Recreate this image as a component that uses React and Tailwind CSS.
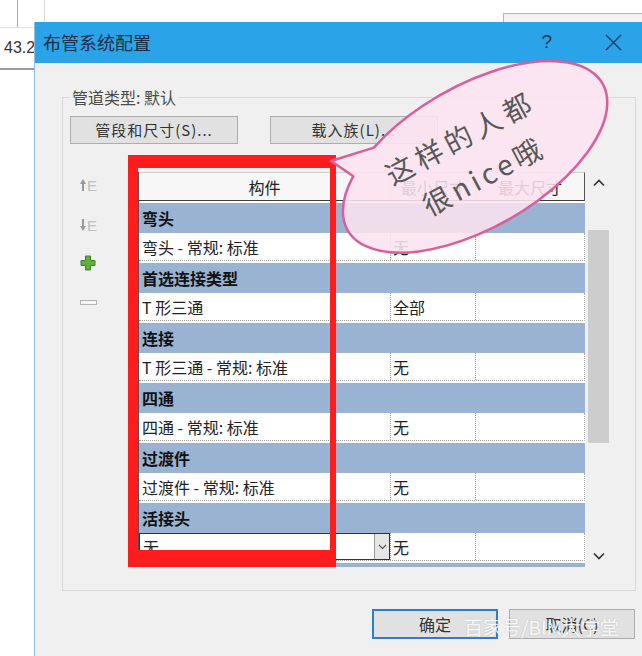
import React from 'react';

const rows = [
  { group: '弯头', item: '弯头 - 常规: 标准', min: '无' },
  { group: '首选连接类型', item: 'T 形三通', min: '全部' },
  { group: '连接', item: 'T 形三通 - 常规: 标准', min: '无' },
  { group: '四通', item: '四通 - 常规: 标准', min: '无' },
  { group: '过渡件', item: '过渡件 - 常规: 标准', min: '无' },
  { group: '活接头', item: '无', min: '无', combo: true },
];

function ArrowE({ down }) {
  return (
    <div className="flex items-center h-[20px]">
      <svg width="6" height="12" viewBox="0 0 6 12">
        {down ? (
          <path d="M3 12 L0 7 H2 V0 H4 V7 H6 Z" fill="#9a9a9a" />
        ) : (
          <path d="M3 0 L6 5 H4 V12 H2 V5 H0 Z" fill="#9a9a9a" />
        )}
      </svg>
      <span className="ml-[1px] text-[15px] leading-none text-[#c0c0c0] font-['Liberation_Sans',sans-serif]">E</span>
    </div>
  );
}

function Chevron({ down }) {
  return (
    <svg width="12" height="8" viewBox="0 0 12 8">
      <path d={down ? 'M1 1.5 L6 6.5 L11 1.5' : 'M1 6.5 L6 1.5 L11 6.5'} stroke="#333" strokeWidth="1.7" fill="none" />
    </svg>
  );
}

export default function App() {
  return (
    <div className="relative w-[642px] h-[656px] overflow-hidden bg-white font-['Noto_Sans_CJK_SC',sans-serif]">
      {/* background application */}
      <div className="absolute left-[17px] top-0 w-[28px] h-[27px] border-l border-l-[#a9a9a9] border-r border-r-[#d8d8d8]" />
      <div className="absolute left-0 top-[27px] w-[40px] h-[43px] border-t border-t-[#e2e2e2] border-b-2 border-b-[#9a9a9a] flex items-center pl-[4px] text-[16px] text-[#333] font-['Liberation_Sans',sans-serif]">
        43.2
      </div>
      <div className="absolute left-[503px] top-[13px] w-[150px] h-[40px] border border-[#b5b5b5] bg-[#f3f3f3] pl-[30px] pt-[5px] text-[16px] leading-[20px] tracking-[3px] text-[#777]">
        系统分类
      </div>

      {/* dialog window */}
      <div className="absolute left-[34px] top-[22px] w-[612px] h-[640px] bg-[#f0f0f0] border-l border-l-[#8cc0e6] flex flex-col">
        <div className="h-[41px] shrink-0 bg-[#2ba3e9] flex items-center pl-[8px]">
          <span className="text-[18px] text-[#1b2c44]">布管系统配置</span>
          <span className="ml-auto text-[19px] text-[#1e3552] font-['Liberation_Sans',sans-serif]">?</span>
          <svg className="ml-[53px] mr-[24px]" width="17" height="17" viewBox="0 0 17 17">
            <path d="M1 1 L16 16 M16 1 L1 16" stroke="#1e3552" strokeWidth="1.3" />
          </svg>
        </div>

        <div className="pl-[27px]">
          <fieldset className="mt-[24px] w-[574px] h-[504px] border border-[#d9d9d9] pl-[7px] pt-[9px]">
            <legend className="px-[2px] text-[16px] leading-[20px] text-[#4a4a4a]">管道类型: 默认</legend>

            <div className="flex gap-[32px]">
              <button className="w-[168px] h-[28px] bg-[#e1e1e1] border border-[#adadad] text-[15px] text-[#333] tracking-[1px]">
                管段和尺寸(S)...
              </button>
              <button className="w-[168px] h-[28px] bg-[#e1e1e1] border border-[#adadad] text-[15px] text-[#333] tracking-[1px]">
                载入族(L)...
              </button>
            </div>

            <div className="mt-[28px] flex h-[395px]">
              {/* side tools */}
              <div className="w-[68px] flex flex-col pl-[10px]">
                <div className="mt-[3px]"><ArrowE /></div>
                <div className="mt-[20px]"><ArrowE down /></div>
                <div className="mt-[18px] h-[20px] flex items-center">
                  <svg width="16" height="16" viewBox="0 0 16 16">
                    <path d="M5.5 1 H10.5 V5.5 H15 V10.5 H10.5 V15 H5.5 V10.5 H1 V5.5 H5.5 Z" fill="#62b03c" stroke="#3f8024" strokeWidth="1" />
                  </svg>
                </div>
                <div className="mt-[19px] h-[20px] flex items-center">
                  <div className="w-[17px] h-[5px] border border-[#b3b3b3] bg-[#f6f6f6]" />
                </div>
              </div>

              {/* table */}
              <div className="w-[447px] flex flex-col border-l border-l-[#505050] bg-white overflow-hidden">
                <div className="h-[29px] shrink-0 flex bg-[#f7f7f7] border-t border-t-[#cfcfcf] border-b border-b-[#3a3a3a] border-r border-r-[#555] text-[16px] text-[#222]">
                  <div className="w-[251px] flex items-center justify-center">构件</div>
                  <div className="w-[85px] border-l border-l-[#d9d9d9] flex items-center justify-center">最小尺寸</div>
                  <div className="flex-1 border-l border-l-[#d9d9d9] flex items-center justify-center">最大尺寸</div>
                </div>
                <div className="h-[2px] shrink-0" />
                {rows.map((r) => (
                  <React.Fragment key={r.group}>
                    <div className="h-[30px] shrink-0 bg-[#9ab3d3] flex items-center pl-[3px] text-[16px] font-bold text-[#111]">
                      {r.group}
                    </div>
                    <div className="h-[28px] shrink-0 flex border-b border-dotted border-b-[#9a9a9a] border-r border-r-[#b0b0b0] text-[16px] text-[#222]">
                      <div className="w-[251px] flex items-center">
                        {r.combo ? (
                          <div className="w-full h-full flex items-center border border-[#333]">
                            <span className="pl-[3px]">{r.item}</span>
                            <div className="ml-auto w-[15px] h-full bg-[#e6e6e6] border-l border-l-[#9a9a9a] flex items-center justify-center">
                              <svg width="9" height="6" viewBox="0 0 9 6">
                                <path d="M1 1 L4.5 4.5 L8 1" stroke="#555" strokeWidth="1.2" fill="none" />
                              </svg>
                            </div>
                          </div>
                        ) : (
                          <span className="pl-[3px]">{r.item}</span>
                        )}
                      </div>
                      <div className="w-[85px] border-l border-dotted border-l-[#9a9a9a] flex items-center pl-[2px]">{r.min}</div>
                      <div className="flex-1 border-l border-dotted border-l-[#9a9a9a]" />
                    </div>
                    <div className="h-[2px] shrink-0" />
                  </React.Fragment>
                ))}
                <div className="h-[6px] shrink-0 bg-[#9ab3d3]" />
              </div>

              {/* scrollbar */}
              <div className="ml-[2px] w-[23px] flex flex-col bg-[#f0f0f0]">
                <div className="h-[22px] flex items-center justify-center"><Chevron /></div>
                <div className="h-[36px]" />
                <div className="h-[213px] mx-[1px] bg-[#cdcdcd]" />
                <div className="flex-1" />
                <div className="h-[22px] flex items-center justify-center"><Chevron down /></div>
              </div>
            </div>
          </fieldset>
        </div>

        <div className="mt-[18px] flex justify-end gap-[11px] pr-[11px]">
          <button className="w-[126px] h-[30px] bg-[#e1e1e1] border-2 border-[#2a7fd4] text-[16px] text-[#333]">确定</button>
          <button className="w-[126px] h-[30px] bg-[#e1e1e1] border border-[#adadad] text-[16px] text-[#333]">取消(C)</button>
        </div>
      </div>

      {/* red annotation frame */}
      <div className="absolute left-[128px] top-[155px] w-[208px] h-[412px] border-solid border-l-[10px] border-t-[13px] border-r-[6px] border-b-[17px] border-[#fe1c1c]" />

      {/* speech bubble */}
      <svg className="absolute left-0 top-0 pointer-events-none" width="642" height="656" viewBox="0 0 642 656">
        <path
          d="M353.3 176.2 L331 161 L373.9 147.6 A147 71 -30 1 1 353.3 176.2 Z"
          fill="#fbe3ef"
          fillOpacity="0.88"
          stroke="#d95f9b"
          strokeWidth="2.5"
          strokeLinejoin="round"
        />
        <text x="392.6" y="186" transform="rotate(-28 392.6 186)" fontSize="28" letterSpacing="5" fill="#585858" fontFamily="'Noto Sans CJK SC', sans-serif">
          这样的人都
        </text>
        <text x="429.6" y="217" transform="rotate(-28 429.6 217)" fontSize="28" letterSpacing="4" fill="#585858" fontFamily="'Noto Sans CJK SC', sans-serif">
          很nice哦
        </text>
      </svg>

      {/* watermark */}
      <div className="absolute left-[464px] top-[615px] text-[19px] leading-[24px] text-white/85 [text-shadow:0_0_2px_rgba(0,0,0,0.15)]">
        百家号/BIM大学堂
      </div>
    </div>
  );
}
